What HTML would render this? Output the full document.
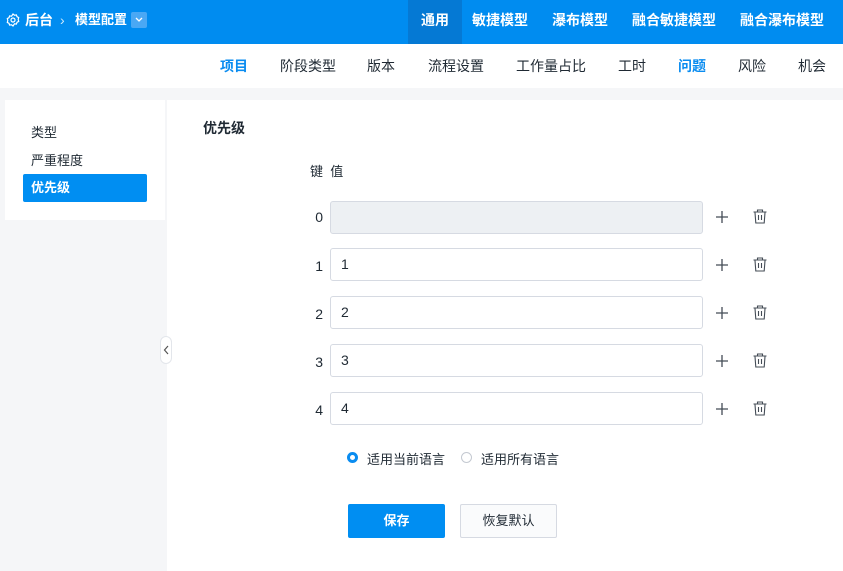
<!DOCTYPE html>
<html><head><meta charset="utf-8"><style>
*{box-sizing:border-box;margin:0;padding:0}
body{width:843px;height:571px;overflow:hidden;background:#f5f6f8;font-family:"Liberation Sans","Noto Sans CJK SC",sans-serif;position:relative;color:#1f2933}
.abs{position:absolute}
.top{left:0;top:0;width:843px;height:44px;background:#008cf0}
.tt{color:#fff;font-weight:bold;font-size:14px;top:0;line-height:40px}
.sub{left:0;top:44px;width:843px;height:44px;background:#fff}
.st{font-size:14px;top:44px;line-height:44px;color:#1f2933}
.inp{left:330px;width:373px;height:33px;border:1px solid #d6dae2;border-radius:3px;background:#fff;font-size:14px;padding-left:10px;line-height:31px}
.k{font-size:14px;width:12px;text-align:right;left:311px}
</style></head><body>
<div class="abs top"></div>
<div class="abs" style="left:408px;top:0;width:54px;height:44px;background:#0579d4"></div>
<svg class="abs" style="left:6px;top:13px" width="14" height="14" viewBox="0 0 14 14" fill="none" stroke="#fff" stroke-width="1.2"><circle cx="7" cy="7" r="2"/><path d="M7 1l1.5 1.2 1.9-.3.6 1.8 1.7.9-.5 1.9.5 1.9-1.7.9-.6 1.8-1.9-.3L7 13l-1.5-1.2-1.9.3-.6-1.8-1.7-.9.5-1.9-.5-1.9 1.7-.9.6-1.8 1.9.3z"/></svg>
<div class="abs tt" style="left:25px">后台</div>
<div class="abs tt" style="left:60px;font-weight:normal;opacity:.8">›</div>
<div class="abs tt" style="left:75px;font-size:13px">模型配置</div>
<div class="abs" style="left:131px;top:12px;width:16px;height:16px;background:#4aa8f4;border-radius:2px"></div>
<svg class="abs" style="left:134px;top:16px" width="10" height="8"><path d="M2 2l3 3 3-3" fill="none" stroke="#fff" stroke-width="1.3"/></svg>
<div class="abs tt" style="left:421px">通用</div>
<div class="abs tt" style="left:472px">敏捷模型</div>
<div class="abs tt" style="left:552px">瀑布模型</div>
<div class="abs tt" style="left:632px">融合敏捷模型</div>
<div class="abs tt" style="left:740px">融合瀑布模型</div>
<div class="abs sub"></div>
<div class="abs st" style="left:220px;color:#0a8cf0;font-weight:bold">项目</div>
<div class="abs st" style="left:280px">阶段类型</div>
<div class="abs st" style="left:367px">版本</div>
<div class="abs st" style="left:428px">流程设置</div>
<div class="abs st" style="left:516px">工作量占比</div>
<div class="abs st" style="left:618px">工时</div>
<div class="abs st" style="left:678px;color:#0a8cf0;font-weight:bold">问题</div>
<div class="abs st" style="left:738px">风险</div>
<div class="abs st" style="left:798px">机会</div>
<div class="abs" style="left:5px;top:100px;width:160px;height:120px;background:#fff"></div>
<div class="abs" style="left:31px;top:122px;font-size:13px">类型</div>
<div class="abs" style="left:31px;top:150px;font-size:13px">严重程度</div>
<div class="abs" style="left:23px;top:174px;width:124px;height:28px;background:#008ef2;border-radius:2px;color:#fff;font-size:13px;line-height:28px;padding-left:8px;font-weight:bold">优先级</div>
<div class="abs" style="left:167px;top:100px;width:676px;height:471px;background:#fff"></div>
<div class="abs" style="left:160px;top:336px;width:12px;height:28px;background:#fff;border:1px solid #e3e6eb;border-radius:6px"></div>
<svg class="abs" style="left:162px;top:344px" width="8" height="12"><path d="M6 2L2.5 6 6 10" fill="none" stroke="#555" stroke-width="1.2"/></svg>
<div class="abs" style="left:203px;top:118px;font-size:14px;font-weight:bold">优先级</div>
<div class="abs" style="left:310px;top:161px;font-size:13px">键&nbsp;&nbsp;值</div>
<div class="abs k" style="top:209px">0</div><div class="abs inp" style="top:201px;background:#edf0f3"></div>
<div class="abs k" style="top:258px">1</div><div class="abs inp" style="top:248px">1</div>
<div class="abs k" style="top:306px">2</div><div class="abs inp" style="top:296px">2</div>
<div class="abs k" style="top:354px">3</div><div class="abs inp" style="top:344px">3</div>
<div class="abs k" style="top:402px">4</div><div class="abs inp" style="top:392px">4</div>
<svg class="abs" style="left:0;top:0" width="843" height="571" fill="none" stroke="#444c56" stroke-width="1.3">
<g id="r"><path d="M722 211v12M716 217h12"/><path d="M753.5 212h13M757.5 212v-2h5v2M755 212.5l.8 10.5h8.4l.8-10.5M758.5 215v5M761.5 215v5" stroke-width="1.1"/></g>
<use href="#r" y="48"/><use href="#r" y="96"/><use href="#r" y="144"/><use href="#r" y="192"/>
</svg>
<div class="abs" style="left:347px;top:452px;width:11px;height:11px;border-radius:50%;border:3px solid #0a8cf0;background:#fff"></div>
<div class="abs" style="left:367px;top:449px;font-size:13px">适用当前语言</div>
<div class="abs" style="left:461px;top:452px;width:11px;height:11px;border-radius:50%;border:1px solid #c4c9d1"></div>
<div class="abs" style="left:481px;top:449px;font-size:13px">适用所有语言</div>
<div class="abs" style="left:348px;top:504px;width:97px;height:34px;background:#008ef2;border-radius:2px;color:#fff;font-size:13px;font-weight:bold;text-align:center;line-height:34px">保存</div>
<div class="abs" style="left:460px;top:504px;width:97px;height:34px;background:#fafbfc;border:1px solid #d6dae2;border-radius:2px;font-size:13px;text-align:center;line-height:32px">恢复默认</div>
</body></html>
